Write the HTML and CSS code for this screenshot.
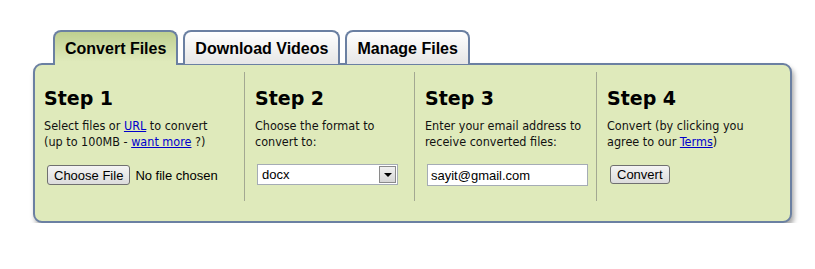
FILE: index.html
```html
<!DOCTYPE html>
<html lang="en">
<head>
  <meta charset="UTF-8">
  <title>Convert Files</title>
  <link rel="stylesheet" href="styles.css">
</head>
<body>
  <div class="converter">
    <div class="tabs">
      <a class="tab active" href="#">Convert Files</a>
      <a class="tab" href="#">Download Videos</a>
      <a class="tab" href="#">Manage Files</a>
    </div>

    <div class="panel">
      <div class="step step1">
        <h2>Step 1</h2>
        <p>Select files or <a href="#">URL</a> to convert<br>(up to 100MB - <a href="#">want more</a> ?)</p>
        <div class="file-pick">
          <button class="btn">Choose File</button>
          <span>No file chosen</span>
        </div>
      </div>

      <div class="step step2">
        <h2>Step 2</h2>
        <p>Choose the format to<br>convert to:</p>
        <div class="select">
          <span class="select-value">docx</span>
          <span class="select-arrow"></span>
        </div>
      </div>

      <div class="step step3">
        <h2>Step 3</h2>
        <p>Enter your email address to<br>receive converted files:</p>
        <input class="email" type="text" value="sayit@gmail.com">
      </div>

      <div class="step step4">
        <h2>Step 4</h2>
        <p>Convert (by clicking you<br>agree to our <a href="#">Terms</a>)</p>
        <button class="btn">Convert</button>
      </div>
    </div>
  </div>
</body>
</html>
```

FILE: styles.css
```css
body {
  margin: 0;
  background: #fff;
  font-family: "DejaVu Sans Condensed", "DejaVu Sans", sans-serif;
}
.converter {
  width: 759px;
  margin: 30px 0 0 33px;
}
.tabs {
  display: flex;
  gap: 5px;
  padding-left: 20px;
  margin-bottom: -2px;
  position: relative;
  z-index: 1;
}
.tab {
  display: block;
  height: 32px;
  line-height: 34px;
  padding: 0 10px;
  border: 2px solid #6b80a2;
  border-bottom: none;
  border-radius: 8px 8px 0 0;
  background: linear-gradient(#ffffff, #e6e6e6);
  color: #000;
  text-decoration: none;
  font-family: "Liberation Sans", Arial, sans-serif;
  font-weight: bold;
  font-size: 16px;
}
.tab.active {
  height: 33px;
  background: linear-gradient(#bfcf90, #dfeabb 90%);
}
.panel {
  display: flex;
  border: 2px solid #6b80a2;
  border-radius: 9px;
  background: #dfeabb;
  box-shadow: 2px 4px 5px rgba(0, 0, 0, 0.35);
  height: 156px;
}
.step {
  margin: 7px 0 20px;
  padding-left: 9px;
  border-right: 1px solid #a3a892;
}
.step1 { width: 200px; }
.step2 { width: 159px; padding-left: 10px; }
.step3 { width: 171px; padding-left: 10px; }
.step4 { flex: 1; padding-left: 10px; border-right: none; }
.step h2 {
  margin: 15px 0 0;
  font-family: "DejaVu Sans", sans-serif;
  font-size: 19px;
  line-height: 22px;
  color: #000;
}
.step p {
  margin: 9px 0 0;
  font-size: 12.5px;
  line-height: 16px;
  color: #111;
}
.step a {
  color: #0000cc;
}
.btn {
  font-family: "Liberation Sans", Arial, sans-serif;
  font-size: 13px;
  padding: 0 6px;
  height: 20px;
  border: 1px solid #707070;
  border-radius: 3px;
  background: linear-gradient(#f4f4f4, #dcdcdc);
  color: #000;
}
.file-pick {
  display: flex;
  align-items: center;
  gap: 5px;
  margin: 15px 0 0 3px;
  font-family: "Liberation Sans", Arial, sans-serif;
  font-size: 13px;
}
.select {
  display: flex;
  align-items: center;
  width: 139px;
  height: 19px;
  margin: 14px 0 0 2px;
  border: 1px solid #a5acb5;
  background: #fff;
  font-family: "Liberation Sans", Arial, sans-serif;
  font-size: 13px;
}
.select-value {
  flex: 1;
  padding-left: 4px;
}
.select-arrow {
  width: 15px;
  height: 15px;
  margin-right: 1px;
  border: 1px solid #8a8a8a;
  background: linear-gradient(#f0f0f0, #d6d6d6);
  display: flex;
  align-items: center;
  justify-content: center;
}
.select-arrow::after {
  content: "";
  border-left: 4px solid transparent;
  border-right: 4px solid transparent;
  border-top: 4px solid #000;
}
.email {
  display: block;
  width: 161px;
  height: 22px;
  box-sizing: border-box;
  margin: 14px 0 0 2px;
  padding: 0 3px;
  border: 1px solid #a5acb5;
  font-family: "Liberation Sans", Arial, sans-serif;
  font-size: 13px;
}
.step4 .btn {
  margin: 15px 0 0 3px;
  height: 19px;
}
```
